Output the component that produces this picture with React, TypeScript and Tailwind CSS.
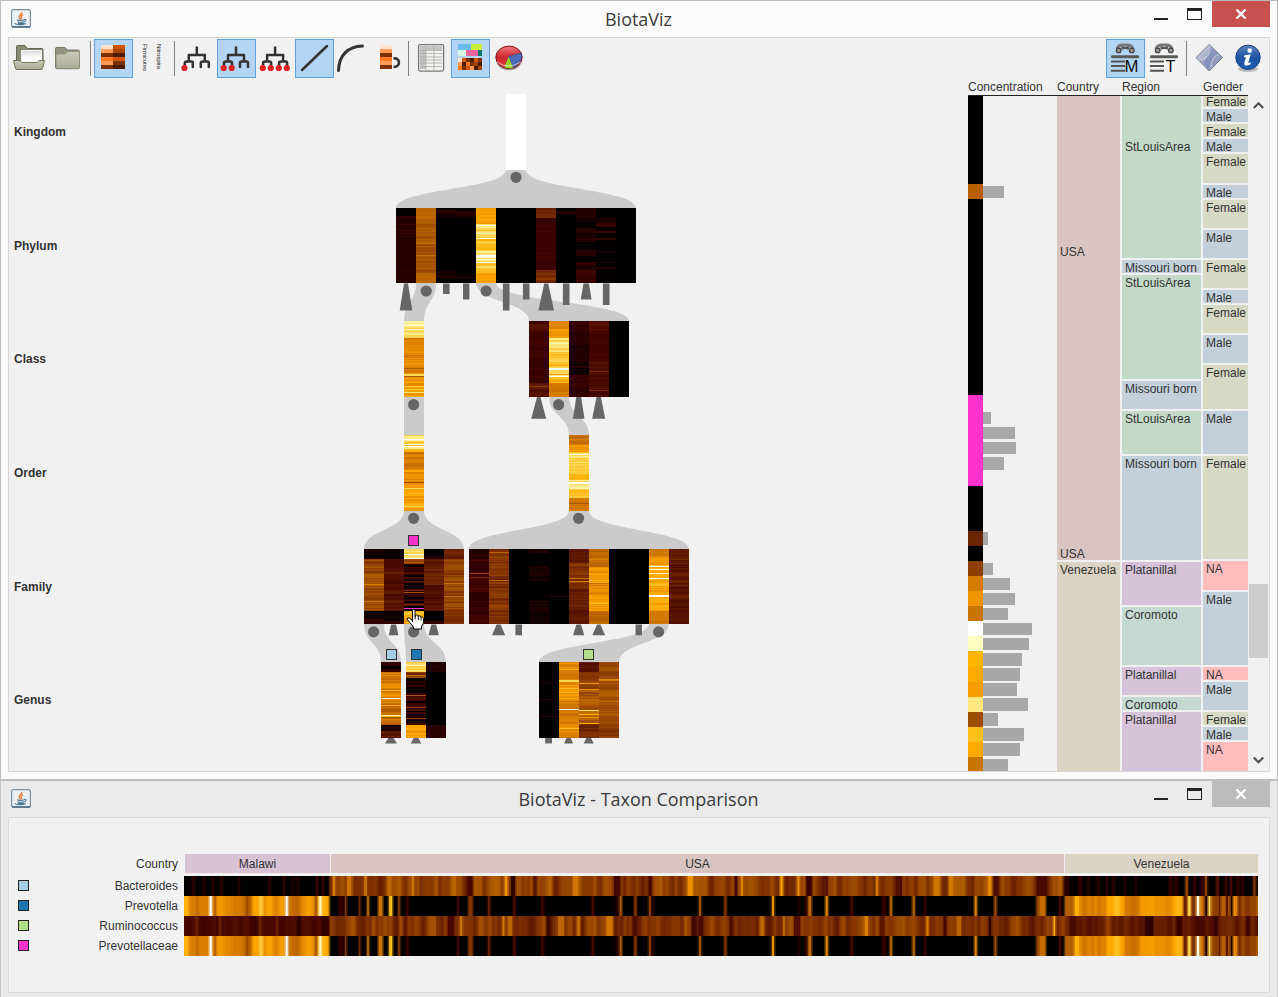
import React from "react";

/* ---------- heat colour scale ---------- */

const RAMP: [number, number, number][] = [
  [0, 0, 0], [30, 0, 0], [48, 0, 0], [70, 6, 0], [92, 22, 0], [117, 42, 0],
  [142, 62, 0], [166, 84, 0], [190, 104, 0], [216, 126, 0], [236, 146, 0],
  [255, 168, 0], [255, 190, 32], [255, 216, 88], [255, 240, 154], [255, 255, 255],
];

function heat(v: number) {
  const c = Math.max(0, Math.min(15, v));
  const i = Math.min(14, Math.floor(c));
  const f = c - i;
  const a = RAMP[i];
  const b = RAMP[i + 1];
  const m = a.map((n, k) => Math.round(n + (b[k] - n) * f));
  return `rgb(${m[0]},${m[1]},${m[2]})`;
}

function random(seed: number) {
  let s = seed * 7919 + 13;
  return () => {
    s = (s * 1103515245 + 12345) % 2147483648;
    return ((s >> 8) & 0xffff) / 65536;
  };
}

/* Neighbouring samples are correlated, so the noise drifts rather than jumps. */
function drift(seed: number) {
  const rnd = random(seed);
  let last = rnd();
  return () => {
    last = last * 0.4 + rnd() * 0.6;
    return last;
  };
}

/* ---------- tree chart ---------- */

type Segment = [number, number, number];
type Lines = Record<number, number>;

function Strip({ x, y, h = 75.6, segs, lines = {}, seed }: { x: number; y: number; h?: number; segs: Segment[]; lines?: Lines; seed: number }) {
  const rnd = drift(seed);
  const out: number[] = [];
  segs.forEach(([n, lo, hi]) => {
    for (let i = 0; i < n; i++) out.push(lo + (hi - lo) * rnd());
  });
  const rows = Math.round(h);
  return (
    <g shapeRendering="crispEdges">
      {Array.from({ length: rows }, (_, i) => (
        <rect key={i} x={x} y={y + i} width={20} height={1} fill={heat(lines[i] ?? out[Math.min(i, out.length - 1)] ?? 0)} />
      ))}
    </g>
  );
}

function Link({ a, b, y1, c, d, y2 }: { a: number; b: number; y1: number; c: number; d: number; y2: number }) {
  const m = (y1 + y2) / 2;
  return <path fill="#cbcbcb" d={`M${a} ${y1}C${a} ${m} ${c} ${m} ${c} ${y2}H${d}C${d} ${m} ${b} ${m} ${b} ${y1}Z`} />;
}

/* centre, top half-width, bottom half-width, top, bottom */
const GLYPHS: [number, number, number, number, number][] = [
  [406, 2, 6.3, 283.5, 310.5], [446.3, 3.3, 3.3, 283.5, 294], [466.2, 3.2, 3.2, 283.5, 299.5],
  [506.2, 3.3, 3.3, 283.5, 310.5], [526.2, 3.3, 3.3, 283.5, 299.5], [546.2, 2, 7.8, 283.5, 310.5],
  [566.2, 3.3, 3.3, 283.5, 305], [586.2, 2.7, 5.4, 283.5, 299.5], [606.2, 3.3, 3.3, 283.5, 305],
  [538.7, 1.7, 7.5, 397, 418.7], [578.7, 2.4, 5.8, 397, 418.7], [598.7, 2.2, 6.5, 397, 418.7],
  [393.6, 2.5, 4.8, 624.5, 635.3], [433.7, 2.4, 5.2, 624.5, 635.3], [498.6, 2, 6.6, 624.5, 635.3],
  [518.7, 3.3, 3.3, 624.5, 635.3], [578.7, 2.3, 5.6, 624.5, 635.3], [598.7, 1.7, 6.4, 624.5, 635.3],
  [638.7, 3.2, 3.2, 624.5, 635.3], [391, 2.5, 6, 738, 743.4], [416, 2.3, 5.2, 738, 743.4],
  [548.6, 3.4, 3.4, 738, 743.4], [568.6, 2.2, 4.4, 738, 743.4], [588.7, 2.3, 5, 738, 743.4],
];

const NODES: [number, number][] = [
  [516, 177.3], [426.2, 291], [486.1, 291], [413.6, 404.7], [558.6, 404.7],
  [413.6, 518.3], [578.6, 518.3], [373.6, 631.9], [413.6, 631.9], [658.6, 631.9],
];

const MARKS: [number, number, string][] = [
  [408, 535, "#ff33cc"], [386, 649, "#a6cee3"], [411, 649, "#1f78b4"], [583, 649, "#b2df8a"],
];

const STRIPS: { x: number; y: number; h?: number; segs: Segment[]; lines?: Lines }[] = [
  /* phylum */
  { x: 396, y: 208, h: 75, segs: [[8, 0, 0.2], [10, 0.8, 2], [57, 1.1, 1.9]], lines: { 8: 2, 16: 2.5, 22: 2.3, 25: 2.5, 62: 2 } },
  { x: 416, y: 208, h: 75, segs: [[10, 7.4, 8.2], [25, 6.2, 8], [30, 6, 7.6], [10, 7.5, 8.2]], lines: { 35: 8.4, 47: 8.3 } },
  { x: 436, y: 208, h: 75, segs: [[2, 0, 0.3], [3, 1.2, 2], [5, 0.2, 1.3], [53, 0, 0], [7, 0.3, 1.5], [5, 0, 0.2]] },
  { x: 456, y: 208, h: 75, segs: [[3, 0, 0.2], [4, 1.1, 1.8], [3, 0.2, 1.3], [55, 0, 0], [6, 0.3, 1.4], [4, 0, 0.1]] },
  { x: 476, y: 208, h: 75, segs: [[16, 9.8, 11.2], [13, 11.4, 14.6], [14, 11, 13.2], [12, 11.8, 15], [10, 11.6, 14], [10, 10, 11.3]], lines: { 17: 14.7, 30: 14.6, 47: 15, 48: 14.8, 54: 15 } },
  { x: 496, y: 208, h: 75, segs: [[75, 0, 0]] },
  { x: 516, y: 208, h: 75, segs: [[75, 0, 0]] },
  { x: 536, y: 208, h: 75, segs: [[10, 4.3, 5.7], [52, 2, 2.9], [13, 4.2, 6]] },
  { x: 556, y: 208, h: 75, segs: [[3, 0, 0], [3, 0.9, 1.5], [69, 0, 0]] },
  { x: 576, y: 208, h: 75, segs: [[10, 0.7, 1.8], [5, 0, 1], [5, 0, 0], [14, 0, 2.6], [6, 0, 0], [8, 0, 1.8], [6, 0, 0], [4, 2, 2.3], [4, 0.6, 1.4], [13, 1.8, 3]] },
  { x: 596, y: 208, h: 75, segs: [[10, 0, 0], [5, 0.6, 1.3], [60, 0, 0.1]], lines: { 15: 2, 16: 2.5, 17: 2.8, 18: 2, 23: 2.3, 24: 2.4, 30: 2.6, 31: 2, 43: 1.6, 54: 1.4, 59: 1.3, 60: 1.6 } },
  { x: 616, y: 208, h: 75, segs: [[75, 0, 0]] },
  /* class */
  { x: 404, y: 321, h: 76, segs: [[17, 11.8, 14.6], [19, 8, 10.2], [18, 8.2, 11.2], [22, 8.8, 11.8]], lines: { 1: 14.3, 4: 14.5, 8: 14.4, 47: 7.1, 53: 13, 54: 13, 55: 7, 65: 12.5, 68: 12.5, 71: 13.4 } },
  { x: 529, y: 321, h: 76, segs: [[3, 2, 3], [7, 3, 4], [52, 2, 3], [14, 3, 4.8]], lines: { 65: 5.8 } },
  { x: 549, y: 321, h: 76, segs: [[8, 8.4, 10], [9, 9.8, 11], [14, 11.8, 14.6], [15, 11.1, 13.5], [10, 11.8, 15], [6, 10.6, 13.2], [14, 8.3, 9.5]], lines: { 47: 15, 48: 15, 53: 10, 55: 15 } },
  { x: 569, y: 321, h: 76, segs: [[10, 1.8, 2.6], [14, 1.1, 2.3], [6, 0.7, 1.2], [10, 1, 1.8], [14, 0.3, 1.7], [22, 1.5, 2.8]], lines: { 43: 0, 47: 0, 50: 0 } },
  { x: 589, y: 321, h: 76, segs: [[10, 3.1, 4.3], [30, 2.4, 3.2], [13, 3, 4], [23, 2.5, 3.8]], lines: { 50: 5, 69: 5 } },
  { x: 609, y: 321, h: 76, segs: [[76, 0, 0]] },
  /* order */
  { x: 404, y: 435, h: 76, segs: [[14, 11.3, 14.5], [3, 11, 12], [18, 7.6, 9.9], [18, 7.2, 10.8], [23, 8.8, 12.2]], lines: { 4: 15, 9: 14.8, 11: 15, 16: 11, 35: 11, 36: 11, 47: 6.5, 53: 13, 71: 13 } },
  { x: 569, y: 435, h: 76, segs: [[10, 7.4, 9.1], [7, 9.5, 11], [11, 11.8, 14.6], [17, 11, 13.4], [9, 12.1, 14.7], [9, 11, 13.6], [13, 8, 9.4]], lines: { 19: 14.7, 47: 15, 48: 14.8, 68: 7 } },
  /* family */
  { x: 364, y: 549, h: 75, segs: [[10, 0, 1.5], [52, 5, 7.8], [8, 0, 1], [5, 1.2, 2.4]], lines: { 35: 9, 52: 8.6 } },
  { x: 384, y: 549, h: 75, segs: [[10, 0, 0.7], [12, 2.3, 4], [40, 2.4, 4.9], [10, 0, 0.6], [3, 1.6, 2.7]] },
  { x: 404, y: 549, h: 75, segs: [[10, 12, 14.4], [5, 4, 8], [8, 1, 3], [36, 0, 4.8], [3, 0, 1], [13, 9, 13]], lines: { 5: 15, 9: 15, 16: 0, 17: 0, 19: 2, 26: 0, 27: 0, 31: 0, 34: 0, 35: 0, 37: 0, 38: 0, 41: 5, 43: 7, 44: 2, 48: 0, 49: 0, 52: 0, 53: 0, 55: 5, 57: 0, 58: 0 } },
  { x: 424, y: 549, h: 75, segs: [[7, 0, 0], [3, 1, 2], [14, 3, 5.2], [12, 3.8, 5.7], [26, 2.7, 4.6], [10, 0, 0.2], [3, 1.7, 2.7]] },
  { x: 444, y: 549, h: 75, segs: [[10, 3.5, 5.3], [52, 4.8, 7.6], [13, 4.7, 6]], lines: { 34: 8.3, 47: 8 } },
  { x: 469, y: 549, h: 75, segs: [[10, 0.5, 2], [18, 1.2, 3.7], [15, 1.6, 3.6], [9, 0.6, 2.4], [23, 1.5, 3]], lines: { 24: 6, 28: 5 } },
  { x: 489, y: 549, h: 75, segs: [[75, 4.2, 6.7]], lines: { 3: 7.8, 31: 8 } },
  { x: 509, y: 549, h: 75, segs: [[75, 0, 0]] },
  { x: 529, y: 549, h: 75, segs: [[1, 0, 0], [3, 0.7, 1.4], [13, 0, 0.1], [15, 0, 1.3], [19, 0, 0], [24, 0, 1.2]], lines: { 17: 1.2, 22: 1.3, 24: 1.2, 26: 1, 31: 1, 52: 1.8, 55: 1.6 } },
  { x: 549, y: 549, h: 75, segs: [[75, 0, 0]], lines: { 47: 2.2 } },
  { x: 569, y: 549, h: 75, segs: [[14, 3.4, 4.6], [26, 4.2, 6.4], [35, 3.5, 5]], lines: { 29: 8, 32: 9 } },
  { x: 589, y: 549, h: 75, segs: [[18, 7.1, 9.2], [15, 9, 11.4], [13, 7.8, 11.2], [16, 9, 11.4], [13, 7.3, 8.8]], lines: { 31: 12, 33: 11.5, 54: 12 } },
  { x: 609, y: 549, h: 75, segs: [[75, 0, 0]] },
  { x: 629, y: 549, h: 75, segs: [[75, 0, 0]] },
  { x: 649, y: 549, h: 75, segs: [[8, 8, 9.2], [8, 9.5, 11], [14, 10.3, 13], [32, 9.3, 12.5], [13, 8, 9.2]], lines: { 17: 15, 20: 14.6, 24: 14.4, 29: 15, 46: 15, 47: 15 } },
  { x: 669, y: 549, h: 75, segs: [[8, 3.7, 4.7], [54, 2.7, 5.1], [13, 3.3, 4.3]] },
  /* genus */
  { x: 381, y: 662, h: 76, segs: [[4, 1.4, 3], [3, 0, 0.3], [3, 2, 2.6], [18, 7, 10.6], [15, 7.2, 10.6], [10, 7, 9.2], [10, 6.2, 9.6], [6, 0, 2], [7, 3, 5.2]], lines: { 28: 12, 36: 14.6, 43: 11, 53: 14, 54: 12 } },
  { x: 406, y: 662, h: 76, segs: [[10, 12, 14.4], [6, 4, 7], [9, 0.3, 3], [6, 0, 0.5], [8, 1, 4.4], [22, 0, 4.7], [2, 2, 3], [13, 9.5, 12.8]], lines: { 3: 14.4, 13: 8, 16: 0, 17: 0, 18: 0, 33: 7, 39: 0, 40: 0, 45: 6, 49: 0, 52: 0, 56: 6, 58: 0 } },
  { x: 426, y: 662, h: 76, segs: [[10, 0, 2], [53, 0, 0], [13, 1.3, 2.2]] },
  { x: 539, y: 662, h: 76, segs: [[76, 0, 0]], lines: { 19: 0.9, 21: 0.8, 37: 1.1, 54: 1.5 } },
  { x: 559, y: 662, h: 76, segs: [[19, 8, 10.5], [18, 8.5, 11.4], [22, 7.6, 10.2], [17, 8, 10.4]], lines: { 7: 11.3, 18: 13, 19: 12.7, 26: 12, 30: 12, 47: 14.8, 66: 12 } },
  { x: 579, y: 662, h: 76, segs: [[10, 3, 5], [10, 5, 7], [42, 5.3, 8.8], [14, 4, 6.2]], lines: { 21: 10, 27: 9.6, 48: 13.4, 52: 11.5, 55: 9.6, 61: 11 } },
  { x: 599, y: 662, h: 76, segs: [[16, 5.5, 7.3], [46, 5.8, 7.8], [14, 4.8, 6.6]], lines: { 17: 9.3, 18: 9, 39: 8.5 } },
];

function TaxonTree() {
  return (
    <svg className="shrink-0" width="340" height="668" viewBox="356 79 340 668">
      <rect x="506" y="94" width="20" height="76" fill="#fff" />
      <Link a={506} b={526} y1={170} c={396} d={636} y2={208} />
      <Link a={416} b={436} y1={283} c={404} d={424} y2={321} />
      <Link a={476} b={496} y1={283} c={529} d={629} y2={321} />
      <Link a={404} b={424} y1={397} c={404} d={424} y2={435} />
      <Link a={549} b={569} y1={397} c={569} d={589} y2={435} />
      <Link a={404} b={424} y1={511} c={364} d={464} y2={549} />
      <Link a={569} b={589} y1={511} c={469} d={689} y2={549} />
      <Link a={364} b={384} y1={624} c={381} d={401} y2={662} />
      <Link a={404} b={424} y1={624} c={406} d={446} y2={662} />
      <Link a={649} b={669} y1={624} c={539} d={619} y2={662} />
      {STRIPS.map((s, i) => (
        <Strip key={i} seed={i + 3} {...s} />
      ))}
      <rect x="404" y="608" width="20" height="1" fill="#ff33cc" />
      {GLYPHS.map(([c, t, b, y1, y2], i) => (
        <path key={i} fill="#666" d={`M${c - t} ${y1}H${c + t}L${c + b} ${y2}H${c - b}Z`} />
      ))}
      {NODES.map(([x, y], i) => (
        <circle key={i} cx={x} cy={y} r="5.6" fill="#666" />
      ))}
      {MARKS.map(([x, y, c], i) => (
        <rect key={i} x={x + 0.5} y={y + 0.5} width="10" height="10" fill={c} stroke="#333" />
      ))}
      <path
        d="M412.5 622V610.5Q412.5 609.3 413.7 609.3T415 610.5V616.5Q415 615 416.7 615T418.2 616.7Q418.5 615.7 419.7 615.8T421 617.5Q421.3 616.7 422.3 617T423.5 618.5V623L421.5 626.5V629H413.5V627L409.5 622.2L407.3 619.4Q407.2 617.5 409 617.7L412.5 620.5Z"
        fill="#fff" stroke="#000" strokeWidth="1"
      />
      <path d="M415.2 616V619.5M418.3 617V620M421.1 618V620.5" stroke="#000" strokeWidth=".9" />
    </svg>
  );
}

/* ---------- toolbar ---------- */

function Tool({ x, active, w = 39, children }: { x: number; active?: boolean; w?: number; children: React.ReactNode }) {
  return (
    <div className={active ? "h-[39px] shrink-0 bg-[#b3d4f2] shadow-[inset_0_0_0_1px_#5fa1de]" : "h-[39px] shrink-0"}>
      <svg className="block" width={w} height="39" viewBox={`${x} 39 ${w} 39`}>{children}</svg>
    </div>
  );
}

function Divider() {
  return <div className="ml-[2px] mr-[3px] h-[35px] w-px shrink-0 bg-[#808080]" />;
}

function HierarchyIcon({ x, dots }: { x: number; dots: number }) {
  const s = x + 19.5;
  return (
    <g fill="none" stroke="#333" strokeWidth="2.5" strokeLinecap="round" strokeLinejoin="round">
      <path d={`M${s} 47.5V55M${s - 8} 61V55H${s + 8}V61M${s - 12} 67V63Q${s - 12} 61.5 ${s - 10} 61.5H${s - 5.5}Q${s - 4} 61.5 ${s - 4} 63V67M${s + 4} 67V63Q${s + 4} 61.5 ${s + 6} 61.5H${s + 10.5}Q${s + 12} 61.5 ${s + 12} 63V67`} />
      {Array.from({ length: dots }, (_, i) => (
        <circle key={i} cx={s - 12.3 + i * 8} cy="68" r="3.1" fill="#e02020" stroke="none" />
      ))}
    </g>
  );
}

const HEAT_LEFT = ["#ffe4d4", "#ff9a58", "#7c3000", "#ff7820", "#ff9a58", "#7c3000"];
const HEAT_RIGHT = ["#d45400", "#a84400", "#4c1c00", "#d45400", "#7c3000", "#4c1c00"];
const MOSAIC = ["#ffe4d4", "#d45400", "#7c3000", "#4c1c00", "#d45400", "#7c3000", "#ff9a58", "#4c1c00", "#ff7820", "#7c3000", "#a84400", "#4c1c00", "#ff7820", "#7c3000", "#d45400", "#ff9a58", "#4c1c00", "#a84400"];

function SearchIcon({ x, letter }: { x: number; letter: string }) {
  return (
    <>
      <path d={`M${x + 11} 49Q${x + 12} 45.5 ${x + 16} 45H${x + 22}Q${x + 26} 45.5 ${x + 27} 49`} fill="none" stroke="#777" strokeWidth="3" />
      <g fill="#999" stroke="#444" strokeWidth="1.3">
        <circle cx={x + 12.7} cy="50.4" r="2.3" />
        <circle cx={x + 25.8} cy="50.4" r="2.3" />
      </g>
      <path d={`M${x + 16.5} 46.5V49.5M${x + 21.8} 46.5V49.5M${x + 16.5} 48H${x + 21.8}`} stroke="#555" strokeWidth="2.2" />
      <rect x={x + 5} y="55.2" width="28" height="3" rx="1.2" fill="#595b59" />
      <path d={`M${x + 5} 61.5h14M${x + 5} 66h14M${x + 5} 70.8h14`} stroke="#555" strokeWidth="2" />
      <text x={x + 18.5 + (letter === "T" ? 2 : 0)} y="72" fontSize="17" textLength={letter === "M" ? 14 : 10} lengthAdjust="spacingAndGlyphs" fill="#111" fontFamily="Liberation Sans, sans-serif">{letter}</text>
    </>
  );
}

function Toolbar() {
  return (
    <div className="flex h-[41px] shrink-0 items-center pl-px pr-px">
      <Tool x={10}>
        <defs>
          <linearGradient id="folder" x1="0" y1="0" x2="0" y2="1">
            <stop offset="0" stopColor="#c9cbb9" />
            <stop offset="1" stopColor="#a9ab97" />
          </linearGradient>
          <linearGradient id="sheet" x1="0" y1="0" x2="0" y2="1">
            <stop offset="0" stopColor="#ddd" />
            <stop offset=".6" stopColor="#fff" />
          </linearGradient>
        </defs>
        <path d="M16.5 66V46.5Q16.5 45.5 17.5 45.5H25L27.5 48.5H42Q43 48.5 43 49.5V66Z" fill="#898b75" stroke="#666853" />
        <rect x="21.5" y="50.5" width="20" height="13" fill="url(#sheet)" stroke="#eee" />
        <path d="M13.5 60.5H20L22 62.5H37L39 60.5H44.5L42.5 68.5Q42.3 69.5 41 69.5H17Q15.7 69.5 15.5 68.5Z" fill="url(#folder)" stroke="#737560" />
      </Tool>
      <Tool x={49}>
        <path d="M55.5 67.5V48.5Q55.5 47.5 56.5 47.5H65L67.5 50H78Q79.5 50 79.5 51.5V67.5Q79.5 68.7 78 68.7H57Q55.5 68.7 55.5 67.5Z" fill="#92947e" stroke="#777965" />
        <path d="M56 54H65L68 51.5H79.5V67Q79.5 68.5 78 68.5H57.5Q56 68.5 56 67Z" fill="url(#folder)" stroke="#8c8e79" strokeWidth=".8" />
      </Tool>
      <Divider />
      <Tool x={94} active>
        {HEAT_LEFT.map((c, i) => <rect key={i} x="101" y={45 + i * 4} width="12" height="4" fill={c} />)}
        {HEAT_RIGHT.map((c, i) => <rect key={i} x="113" y={45 + i * 4} width="12" height="4" fill={c} />)}
      </Tool>
      <Tool x={133}>
        <g fontSize="6.2" fill="#222" fontFamily="Liberation Sans, sans-serif">
          <text transform="translate(142.6 44) rotate(90)" textLength="27">Firmicutes</text>
          <text transform="translate(157 44) rotate(90)" textLength="25">Nitrospira</text>
        </g>
      </Tool>
      <Divider />
      <Tool x={178}><HierarchyIcon x={177.3} dots={1} /></Tool>
      <Tool x={217} active><HierarchyIcon x={216.5} dots={2} /></Tool>
      <Tool x={256}><HierarchyIcon x={255.6} dots={4} /></Tool>
      <Tool x={295} active>
        <path d="M302 70L327 46" stroke="#333" strokeWidth="2.5" strokeLinecap="round" />
      </Tool>
      <Tool x={334} w={33}>
        <path d="M338.5 70.5C339 55 348 46.5 362.5 46" fill="none" stroke="#333" strokeWidth="3" strokeLinecap="round" />
      </Tool>
      <Tool x={367}>
        {HEAT_LEFT.map((c, i) => <rect key={i} x="380" y={45 + i * 4} width="12" height="4" fill={c} />)}
        <path d="M393.5 58.5C400.5 57 401 67.5 393.5 66.8" fill="none" stroke="#333" strokeWidth="2.6" />
      </Tool>
      <Divider />
      <Tool x={412}>
        <rect x="418.6" y="44.6" width="25" height="26.5" rx="1.5" fill="#f2f2f0" stroke="#777" strokeWidth="1.3" />
        <rect x="420" y="46" width="22" height="4" fill="#c4c4c2" />
        <rect x="420" y="46" width="6" height="23" fill="#c4c4c2" />
        <path d="M420 50.5H442M420 53.5H442M420 57H442M420 60H442M420 63H442M420 66.5H442M426 46V69.5M434 46V69.5" stroke="#aaaaa8" strokeWidth=".8" />
      </Tool>
      <Tool x={451} active>
        <g shapeRendering="crispEdges">
          <rect x="458" y="44" width="13" height="6" fill="#6abcec" />
          <rect x="471" y="44" width="11" height="6" fill="#c8ec3c" />
          <rect x="458" y="50" width="8" height="6" fill="#d4fce4" />
          <rect x="466" y="50" width="12" height="6" fill="#ec64a0" />
          <rect x="478" y="50" width="4" height="6" fill="#10766a" />
          {MOSAIC.map((c, i) => <rect key={i} x={458 + (i % 6) * 4} y={58 + Math.floor(i / 6) * 4} width="4" height="4" fill={c} />)}
        </g>
      </Tool>
      <Tool x={490}>
        <defs>
          <linearGradient id="pie" x1="0" y1="0" x2="0" y2="1">
            <stop offset="0" stopColor="#f0787c" />
            <stop offset=".5" stopColor="#d0252c" />
            <stop offset="1" stopColor="#e8454c" />
          </linearGradient>
        </defs>
        <ellipse cx="509" cy="59.5" rx="13" ry="10.8" fill="#999" />
        <ellipse cx="509" cy="57.3" rx="13.2" ry="11.2" fill="url(#pie)" stroke="#7d1518" />
        <path d="M508.5 56.5L521 53Q524 61 513.5 67.5Z" fill="#4a6db5" stroke="#2e4a88" strokeWidth=".6" />
        <path d="M508.5 56.5L504.5 67.5Q509 69 513 67.7Z" fill="#8fd42c" />
        <path d="M497 62Q508 70 521 62" fill="none" stroke="#fff" strokeOpacity=".6" />
      </Tool>
      <div className="grow" />
      <Tool x={1106} active><SearchIcon x={1106} letter="M" /></Tool>
      <Tool x={1145}><SearchIcon x={1145} letter="T" /></Tool>
      <Divider />
      <Tool x={1190}>
        <defs>
          <linearGradient id="gem" x1="0" y1="0" x2="1" y2="1">
            <stop offset="0" stopColor="#d0d3dd" />
            <stop offset=".5" stopColor="#a3acc9" />
            <stop offset="1" stopColor="#7480a8" />
          </linearGradient>
        </defs>
        <path d="M1209.2 44.5L1222.5 57.5L1209.2 71L1196 57.5Z" fill="url(#gem)" stroke="#777c8e" />
        <path d="M1209.2 45.5L1218 54Q1212 56 1210.5 63L1208 69L1203 62Q1211 56 1209.2 45.5Z" fill="#7485b5" fillOpacity=".6" />
        <path d="M1209.5 46Q1212 56 1199 60.5M1218.5 54.5Q1211.5 57 1211 68" fill="none" stroke="#d6dae7" strokeDasharray="2 .7" />
      </Tool>
      <Tool x={1229}>
        <defs>
          <linearGradient id="info" x1="0" y1="0" x2="0" y2="1">
            <stop offset="0" stopColor="#5b85bd" />
            <stop offset=".5" stopColor="#2156a3" />
            <stop offset="1" stopColor="#1f5fae" />
          </linearGradient>
        </defs>
        <ellipse cx="1248" cy="69" rx="10" ry="3" fill="#bbb" />
        <circle cx="1248" cy="57.3" r="12.2" fill="url(#info)" stroke="#173f7c" />
        <circle cx="1249.7" cy="50.6" r="2.3" fill="#fff" />
        <path d="M1244.2 55.5L1250.7 54.2L1248.3 62.5Q1248.3 63.6 1251 62L1250.3 64.5Q1243.5 67.3 1244.4 62.7L1245.9 57.4L1243.9 57Z" fill="#fff" />
      </Tool>
    </div>
  );
}

/* ---------- sample table ---------- */

const ROW = 15.083;

type Cell = { rows: number; label: string; color: string; skip?: number; extra?: string };

const F = "#d6d9c3";
const M = "#c3cfd9";
const NA = "#ffbcbc";
const ST = "#c3d9c9";
const PL = "#d5c3d9";
const CO = "#c3d9d1";

/* The first row of every column is cut off by the scroll position. */
const GENDER: Cell[] = [
  { rows: 0.87, label: "Female", color: F, skip: -0.15 },
  { rows: 1, label: "Male", color: M },
  { rows: 1, label: "Female", color: F },
  { rows: 1, label: "Male", color: M },
  { rows: 2, label: "Female", color: F },
  { rows: 1, label: "Male", color: M },
  { rows: 2, label: "Female", color: F },
  { rows: 2, label: "Male", color: M },
  { rows: 2, label: "Female", color: F },
  { rows: 1, label: "Male", color: M },
  { rows: 2, label: "Female", color: F },
  { rows: 2, label: "Male", color: M },
  { rows: 3, label: "Female", color: F },
  { rows: 3, label: "Male", color: M },
  { rows: 7, label: "Female", color: F },
  { rows: 2, label: "NA", color: NA },
  { rows: 5, label: "Male", color: M },
  { rows: 1, label: "NA", color: NA },
  { rows: 2, label: "Male", color: M },
  { rows: 1, label: "Female", color: F },
  { rows: 1, label: "Male", color: M },
  { rows: 2.1, label: "NA", color: NA },
];

const REGION: Cell[] = [
  { rows: 10.87, label: "StLouisArea", color: ST, skip: 2.88 },
  { rows: 1, label: "Missouri born", color: M },
  { rows: 7, label: "StLouisArea", color: ST },
  { rows: 2, label: "Missouri born", color: M },
  { rows: 3, label: "StLouisArea", color: ST },
  { rows: 7, label: "Missouri born", color: M },
  { rows: 3, label: "Platanillal", color: PL },
  { rows: 4, label: "Coromoto", color: CO },
  { rows: 2, label: "Platanillal", color: PL },
  { rows: 1, label: "Coromoto", color: CO },
  { rows: 4.1, label: "Platanillal", color: PL },
];

const COUNTRY: Cell[] = [
  { rows: 30.87, label: "USA", color: "#d9c3c3", skip: 9.82, extra: "USA" },
  { rows: 14.1, label: "Venezuela", color: "#d9d4c3" },
];

function Column({ title, cells, className }: { title: string; cells: Cell[]; className: string }) {
  return (
    <div className={`flex shrink-0 flex-col ${className}`}>
      <div className="flex h-[17px] shrink-0 items-center whitespace-nowrap border-b border-[#222] leading-[15px]">{title}</div>
      {cells.map((c, i) => (
        <div
          key={i}
          className="flex shrink-0 flex-col justify-between whitespace-nowrap border-b-2 border-[#f1f1f1] bg-clip-padding pl-[3px]"
          style={{ height: c.rows * ROW, backgroundColor: c.color }}
        >
          <span className="block h-[15px] shrink-0 leading-[16px]" style={{ marginTop: (c.skip ?? 0) * ROW }}>{c.label}</span>
          {c.extra && <span className="-mb-[2px] block leading-[15px]">{c.extra}</span>}
        </div>
      ))}
    </div>
  );
}

const CONCENTRATION: [number, string, number][] = [
  [0.84, "#000", 0],
  ...Array.from({ length: 5 }, (): [number, string, number] => [1, "#000", 0]),
  [1, "#b86000", 20.5],
  ...Array.from({ length: 13 }, (): [number, string, number] => [1, "#000", 0]),
  [1, "#ff33cc", 0], [1, "#ff33cc", 7.7], [1, "#ff33cc", 32.3], [1, "#ff33cc", 32.8], [1, "#ff33cc", 20.6], [1, "#ff33cc", 0],
  [1, "#000", 0], [1, "#000", 0], [1, "#000", 0],
  [1, "#6a2400", 4.6], [1, "#000", 0],
  [1, "#8e4000", 10], [1, "#d47c00", 26.7], [1, "#f09400", 31.5], [1, "#c87400", 25],
  [1, "#ffffff", 48.8], [1, "#ffffc4", 46], [1, "#ffb400", 38.6], [1, "#ffaa00", 37],
  [1, "#f89c00", 33.6], [1, "#ffe680", 44.5], [1, "#9e4e00", 15], [1, "#ffc01c", 41],
  [1, "#ffaa00", 37], [1, "#c87400", 25],
];

function SampleTable() {
  return (
    <div className="flex h-[692px] w-[280px] shrink-0 overflow-hidden">
      <div className="flex w-[89px] shrink-0 flex-col">
        <div className="flex h-[17px] shrink-0 items-center border-b border-[#222] leading-[15px]">Concentration</div>
        {CONCENTRATION.map(([rows, color, width], i) => (
          <div key={i} className="flex shrink-0" style={{ height: rows * ROW }}>
            <div className="w-[15px] shrink-0" style={{ backgroundColor: color }} />
            <div className="my-px mt-[1.5px] bg-[#a8a8a8]" style={{ width }} />
          </div>
        ))}
      </div>
      <Column title="Country" cells={COUNTRY} className="w-[65px] [&>div:not(:first-child)]:border-r-2" />
      <Column title="Region" cells={REGION} className="w-[81px] [&>div:not(:first-child)]:border-r-2" />
      <Column title="Gender" cells={GENDER} className="w-[45px]" />
    </div>
  );
}

function ScrollBar() {
  return (
    <div className="flex h-[692px] w-5 shrink-0 flex-col items-center pr-px pt-4">
      <svg className="shrink-0" width="19" height="20" viewBox="0 0 19 20">
        <path d="M4.8 13L9.5 8.2L14.2 13" fill="none" stroke="#505050" strokeWidth="2.2" />
      </svg>
      <div className="mt-[469px] h-[74px] w-[19px] shrink-0 bg-[#cdcdcd]" />
      <div className="grow" />
      <svg className="shrink-0" width="19" height="20" viewBox="0 0 19 20">
        <path d="M4.8 6.5L9.5 11.3L14.2 6.5" fill="none" stroke="#505050" strokeWidth="2.2" />
      </svg>
    </div>
  );
}

/* ---------- taxon comparison ---------- */

type Peak = [number, number, number];
type Zone = [number, number, number, number];

function Band({ id, y, zones, peaks, seed }: { id: string; y: number; zones: Zone[]; peaks: Peak[]; seed: number }) {
  const rnd = drift(seed);
  const stops: React.ReactNode[] = [];
  for (let x = 184; x <= 1258; x += 3) {
    const z = zones.find((q) => x >= q[0] && x < q[1]) ?? zones[zones.length - 1];
    stops.push(<stop key={x} offset={(x - 184) / 1074} stopColor={heat(z[2] + (z[3] - z[2]) * rnd())} />);
  }
  return (
    <>
      <linearGradient id={id}>{stops}</linearGradient>
      <rect x="184" y={y} width="1074" height="20" fill={`url(#${id})`} />
      {peaks.map(([x, v, w], i) => (
        <g key={i} fill={heat(v)}>
          <rect x={x - w / 2 - 1.5} y={y} width={w + 3} height="20" fillOpacity=".35" />
          <rect x={x - w / 2} y={y} width={w} height="20" />
        </g>
      ))}
    </>
  );
}

const PREVOTELLA_ZONES: Zone[] = [
  [184, 190, 11, 12], [190, 240, 8.3, 10.8], [240, 252, 6.5, 10], [252, 272, 9.8, 11.6], [272, 285, 9, 11],
  [285, 300, 7.6, 8.6], [300, 318, 8.1, 10.8], [318, 331, 10.3, 11.8], [331, 1065, 0, 0],
  [1065, 1074, 7, 9], [1074, 1108, 7.8, 10.3], [1108, 1124, 9.5, 12], [1124, 1140, 7.5, 9],
  [1140, 1172, 9, 11], [1172, 1184, 9.5, 11.8], [1184, 1259, 4.5, 9.8],
];
const PREVOTELLA_PEAKS: Peak[] = [
  [197, 8, 1], [210.7, 15, 2], [215, 7.5, 1.5], [247, 6.5, 1.5], [261, 12.5, 3], [286.7, 15, 2], [316, 6.5, 1], [320.3, 14.4, 2],
  [340.7, 2, 4], [345.7, 5.5, 1.5], [359.7, 5.5, 1], [368, 8.5, 1.5], [380.5, 8.5, 4], [390.7, 12, 3], [399, 6, 1.5], [407.3, 2.3, 2],
  [458, 2.7, 2], [470.5, 5.5, 4], [489, 4.3, 2], [514.3, 3.3, 2], [542.5, 3, 2], [592.8, 3.2, 2], [617, 2, 1], [620.7, 7, 2], [635.4, 5.7, 2], [650, 6, 2], [653, 1.5, 2],
  [700, 6.8, 2], [725.4, 5.6, 2], [773, 9.7, 2], [798.7, 1, 2], [806, 2, 2], [809.8, 7.8, 3], [826.7, 9.6, 2],
  [851.7, 3, 2], [884, 1.9, 4], [891, 8.5, 1.5], [913.7, 7.8, 2], [925, 2, 2], [975.7, 9.4, 2], [995.4, 6.6, 2],
  [1038, 6, 3], [1042.5, 8.2, 6], [1060, 3, 2], [1077, 11.3, 4], [1117, 12, 5], [1179, 11.7, 5], [1185.4, 4.5, 3], [1189.3, 13, 2],
  [1193.5, 5, 2], [1198, 14.7, 2], [1206.3, 1, 2], [1209.5, 13, 1.5], [1219.5, 4, 1], [1227, 4, 2], [1231.7, 1, 1.5], [1234.7, 10, 1.5], [1239.5, 5, 2],
];

const BACTEROIDES_PEAKS: Peak[] = [
  [193.5, 2, 2], [204, 1, 2], [213, 1.2, 2], [221.7, 2, 2], [239, 1, 2], [269.7, 1.6, 2], [284, 2, 2], [293, 1, 2], [298, 1, 3], [317, 2.3, 2], [323, 3, 1],
  [331.5, 5, 1], [334, 8.6, 2], [349, 8.5, 4], [365.5, 8.2, 3], [389, 8, 3], [413, 8.5, 2], [440, 5, 2], [454, 7.8, 4], [470, 3, 5], [506, 10, 2.5], [513, 2, 4],
  [535, 4, 3], [550, 7.6, 3], [575.5, 8.7, 5], [617, 3, 6], [650, 3, 3], [690.3, 10, 5], [736, 3, 2], [742, 9, 2], [781.5, 11, 2], [798.5, 9.8, 2], [809, 2.4, 5], [825, 4, 6],
  [877, 9.5, 1.5], [899, 3.5, 6], [936.5, 8.6, 6], [951, 8.7, 4], [989.7, 9.7, 3], [996, 3.3, 5], [1042, 3.2, 10], [1060, 7.5, 3],
  [1067, 1.5, 4], [1080, 2, 3], [1088, 1.4, 2], [1098, 1.5, 3], [1107, 1.7, 2], [1113.5, 2, 2], [1125, 1, 2], [1136, 1, 2], [1170.5, 2, 3], [1176, 1.5, 4], [1186.7, 6.5, 2],
  [1194.7, 2.5, 2], [1202, 2, 3], [1206, 6, 2], [1217.5, 4, 2], [1226, 2.6, 2], [1231, 3, 2], [1238, 1.6, 4], [1242.5, 1.6, 3], [1254.5, 5.5, 2],
];

const RUMINOCOCCUS_PEAKS: Peak[] = [
  [197, 4.8, 1], [220, 4.5, 2], [260, 4.6, 2], [277, 4.8, 1], [299, 1.5, 3], [325, 2, 6], [353, 6.8, 4], [374, 6.5, 3], [401, 6.5, 3], [433, 6.8, 6], [451, 3.2, 6], [461, 8.5, 2],
  [481, 6.8, 4], [503.5, 9, 1.5], [510, 7.8, 4], [548.5, 2.6, 3], [561, 7.8, 6], [578.6, 8.6, 2], [609.5, 8.7, 6], [635, 3.4, 5], [686, 7, 2], [694, 3, 5], [701, 3.3, 5], [731, 3.3, 3],
  [762, 8.2, 3], [784, 7.8, 2], [797, 3.5, 6], [866.5, 9, 3], [882, 4, 5], [927.5, 8.8, 2], [945, 3, 3], [959, 7.8, 4], [990, 2, 2], [1017, 6.8, 3], [1054.3, 11, 1.5], [1073, 3.2, 6], [1108, 6, 4],
  [1149, 2, 8], [1179, 2.2, 5], [1199, 2.8, 3], [1216, 2.2, 3], [1230, 5, 3], [1248, 3, 4],
];

const TAXA: [string, string][] = [
  ["Bacteroides", "bg-[#a6cee3]"], ["Prevotella", "bg-[#1f78b4]"], ["Ruminococcus", "bg-[#b2df8a]"], ["Prevotellaceae", "bg-[#ff33cc]"],
];

function Comparison() {
  return (
    <div className="flex h-[176px] flex-col border border-[#d9d9d9] bg-[#f1f1f1] pl-[9px] pt-9 text-[12px] text-[#333]">
      <div className="flex h-[19px] shrink-0 items-center">
        <div className="w-[160px] shrink-0 text-right">Country</div>
        <div className="ml-[7px] flex h-[19px] gap-px text-center leading-[20px]">
          <div className="w-[145px] bg-[#d9c3d3]">Malawi</div>
          <div className="w-[733px] bg-[#d9c3c3]">USA</div>
          <div className="w-[193px] bg-[#d9d4c3]">Venezuela</div>
        </div>
      </div>
      <div className="mt-[3px] flex shrink-0">
        <div className="flex w-[160px] shrink-0 flex-col">
          {TAXA.map(([name, color]) => (
            <div key={name} className="flex h-5 items-start justify-between">
              <div className={`mt-1 size-[11px] border border-[#222] ${color}`} />
              <div className="leading-5">{name}</div>
            </div>
          ))}
        </div>
        <svg className="ml-[6px] block shrink-0" width="1074" height="80" viewBox="184 0 1074 80">
          <Band id="band-a" y={0} seed={5} zones={[[184, 331, 0, 0], [331, 1065, 3.6, 7.8], [1065, 1259, 0, 0.1]]} peaks={BACTEROIDES_PEAKS} />
          <Band id="band-b" y={20} seed={9} zones={PREVOTELLA_ZONES} peaks={PREVOTELLA_PEAKS} />
          <Band id="band-c" y={40} seed={14} zones={[[184, 331, 2.2, 3.9], [331, 1065, 3.5, 7.4], [1065, 1259, 2.8, 5.5]]} peaks={RUMINOCOCCUS_PEAKS} />
          <Band id="band-d" y={60} seed={9} zones={PREVOTELLA_ZONES} peaks={PREVOTELLA_PEAKS} />
        </svg>
      </div>
    </div>
  );
}

/* ---------- window frame ---------- */

function JavaIcon() {
  return (
    <svg className="mt-2 block shrink-0" width="20" height="19" viewBox="0 0 20 19">
      <rect x=".6" y=".6" width="18.8" height="17.8" rx="2" fill="#eef1f3" stroke="#7890a2" strokeWidth="1.2" />
      <path d="M1 17.8H19" stroke="#3f6078" strokeWidth="1.2" />
      <path d="M10.8 3C11.5 5 7 6 8.2 8.3Q8.7 9.4 9.7 10.5M12.2 5.7C9.5 6.8 9.8 7.6 10.5 8.4Q11 9.3 10.2 10" fill="none" stroke="#e8762c" strokeWidth="1.3" />
      <path d="M6 10.7Q9.5 12 13.3 10.7M6.5 12.7Q10 13.8 12.5 12.7M13 10.3Q16 10 14.5 12Q13.8 12.8 12.7 13M3.8 14.5Q8.5 17 15 14.6M7 14.3Q10 15 12.5 14.2" fill="none" stroke="#42708f" strokeWidth="1.1" />
    </svg>
  );
}

function TitleBar({ title, close, width }: { title: string; close: string; width: string }) {
  return (
    <div className="flex h-9 shrink-0 items-start pl-[10px] pr-[7px]">
      <JavaIcon />
      <div className="w-[201px] shrink-0" />
      <div className="flex h-9 w-[811px] shrink-0 justify-center">
        <svg className="block" width="300" height="36" viewBox="0 0 300 36">
          <text x="150.5" y="25" textAnchor="middle" textLength={width} lengthAdjust="spacingAndGlyphs" fontSize="18.5" fontFamily="Open Sans, Noto Sans, sans-serif" fill="#3a3a3a">{title}</text>
        </svg>
      </div>
      <div className="grow" />
      <div className="mr-[19px] mt-[17px] h-[2px] w-[14px] bg-[#222]" />
      <div className="mr-[10px] mt-[7px] h-3 w-[15px] border border-t-[3px] border-[#222]" />
      <div className={`flex h-[26px] w-[58px] items-center justify-center pr-px ${close}`}>
        <svg width="12" height="10" viewBox="0 0 12 10"><path d="M1.5 .5L10.5 9.5M10.5 .5L1.5 9.5" stroke="#fff" strokeWidth="2.3" /></svg>
      </div>
    </div>
  );
}

const LEVELS = ["Kingdom", "Phylum", "Class", "Order", "Family", "Genus"];

export default function App() {
  return (
    <div className="h-[997px] w-[1278px] overflow-hidden bg-[#eaeaea] font-['Liberation_Sans',sans-serif] text-[12px] text-[#333]">
      <div className="flex h-[781px] flex-col border-b-2 border-l border-r border-t border-[#bdbdbd] bg-[#fbfbfb]">
        <TitleBar title="BiotaViz" close="bg-[#c75050]" width="67" />
        <div className="ml-[7px] flex h-[735px] w-[1262px] flex-col border border-[#d6d6d6] bg-[#f1f1f1]">
          <Toolbar />
          <div className="flex">
            <div className="w-[347px] shrink-0 pl-[5px] pt-[45px] font-bold">
              {LEVELS.map((l) => <div key={l} className="h-[113.7px] leading-4">{l}</div>)}
            </div>
            <TaxonTree />
            <div className="grow" />
            <SampleTable />
            <div className="w-px shrink-0" />
            <ScrollBar />
          </div>
        </div>
      </div>
      <div className="flex h-[216px] flex-col border-l border-r border-[#c8c8c8] bg-[#eaeaea]">
        <TitleBar title="BiotaViz - Taxon Comparison" close="bg-[#bcbcbc]" width="240" />
        <div className="ml-[7px] w-[1262px]"><Comparison /></div>
      </div>
    </div>
  );
}
